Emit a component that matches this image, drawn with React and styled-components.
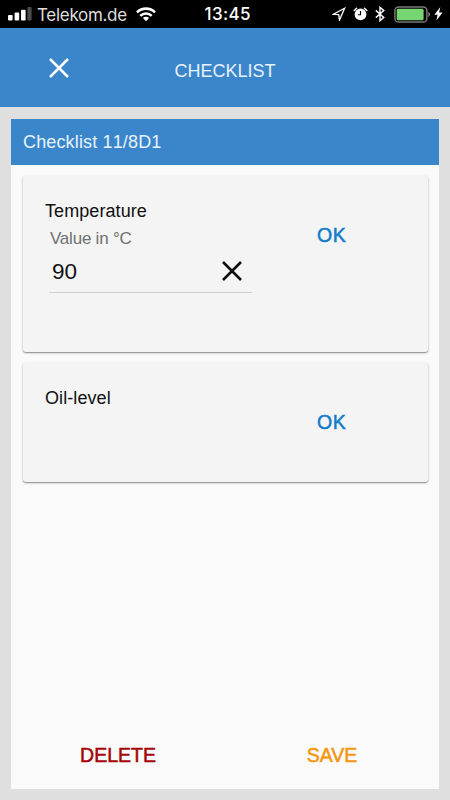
import { useState } from 'react';
import styled, { createGlobalStyle } from 'styled-components';

const GlobalStyle = createGlobalStyle`
  * {
    box-sizing: border-box;
  }
  body {
    margin: 0;
    font-family: 'Liberation Sans', Arial, sans-serif;
    background: #dfdfdf;
  }
  h1, h2, h3, p {
    margin: 0;
    font-weight: 400;
  }
  button {
    border: none;
    padding: 0;
    background: none;
    font-family: inherit;
    cursor: pointer;
  }
`;

function StatusBar() {
  return (
    <Status>
      <Carrier>
        <svg width="24" height="14" viewBox="0 0 24 14" fill="#fff">
          <rect x="0" y="8" width="4.6" height="5.5" rx="1" />
          <rect x="6.6" y="5.6" width="4.6" height="7.9" rx="1" />
          <rect x="13" y="2.8" width="4.6" height="10.7" rx="1" />
          <rect x="19.4" y="0" width="4.2" height="13.5" rx="1" fill="#4c4c4c" />
        </svg>
        <CarrierName>Telekom.de</CarrierName>
        <svg width="20" height="15" viewBox="0 0 20 15" fill="none" stroke="#fff" strokeWidth="2.6">
          <path d="M1 5.3a12.8 12.8 0 0 1 18 0" />
          <path d="M4.3 8.8a8.1 8.1 0 0 1 11.4 0" />
          <path d="M10 14.2 6.9 11.1a4.4 4.4 0 0 1 6.2 0Z" fill="#fff" stroke="none" />
        </svg>
      </Carrier>
      <Time>13:45</Time>
      <Indicators>
        <svg width="14" height="14" viewBox="0 0 14 14" fill="none" stroke="#fff" strokeWidth="1.3">
          <path d="M12.6 1.3 1.4 7.3l5.3.3.8 5.4Z" />
        </svg>
        <svg width="15" height="14" viewBox="0 0 15 14">
          <circle cx="7.5" cy="7.4" r="5.9" fill="#fff" />
          <path d="M1.2 3.5 3.6 1.3M13.8 3.5 11.4 1.3" stroke="#fff" strokeWidth="1.5" strokeLinecap="round" />
          <path d="M7.5 3.9v3.8H4.9" fill="none" stroke="#000" strokeWidth="1.1" />
        </svg>
        <svg width="10" height="16" viewBox="0 0 10 16" fill="none" stroke="#fff" strokeWidth="1.4">
          <path d="M.8 4.4 8.8 11.4 5 14.7V1.3l3.8 3.3L.8 11.6" />
        </svg>
        <svg width="38" height="17" viewBox="0 0 38 17">
          <rect x=".9" y=".9" width="32" height="15.2" rx="3.6" fill="none" stroke="#777" strokeWidth="1.5" />
          <rect x="2.7" y="2.7" width="26.9" height="11.6" rx="1.5" fill="#76d672" />
          <path d="M34.4 5.8q3.4 2.7 0 5.4Z" fill="#888" />
        </svg>
        <svg width="9" height="14" viewBox="0 0 9 14" fill="#fff">
          <path d="M6.3 0 .4 7.7h3.2L2.4 13.6 8.6 5.6H5.1Z" />
        </svg>
      </Indicators>
    </Status>
  );
}

function CloseIcon({ color, thickness }) {
  return (
    <svg width="20" height="20" viewBox="0 0 20 20" fill="none" stroke={color} strokeWidth={thickness}>
      <path d="M1 1 19 19M19 1 1 19" />
    </svg>
  );
}

function App() {
  const [temperature, setTemperature] = useState('90');
  return (
    <Screen>
      <GlobalStyle />
      <StatusBar />
      <Header>
        <CloseButton aria-label="Close">
          <CloseIcon color="#fff" thickness={2.5} />
        </CloseButton>
        <HeaderTitle>CHECKLIST</HeaderTitle>
      </Header>
      <Panel>
        <PanelTitle>Checklist 11/8D1</PanelTitle>
        <Cards>
          <Card $height={176}>
            <Entry>
              <EntryName>Temperature</EntryName>
              <FieldLabel>Value in °C</FieldLabel>
              <Field>
                <Value>{temperature}</Value>
                <ClearButton aria-label="Clear value" onClick={() => setTemperature('')}>
                  <CloseIcon color="#0c0c0c" thickness={2.5} />
                </ClearButton>
              </Field>
            </Entry>
            <OkButton>OK</OkButton>
          </Card>
          <Card $height={119}>
            <Entry>
              <EntryName>Oil-level</EntryName>
            </Entry>
            <OkButton>OK</OkButton>
          </Card>
        </Cards>
        <Actions>
          <ActionButton $color="#a50505">DELETE</ActionButton>
          <ActionButton $color="#f4960f">SAVE</ActionButton>
        </Actions>
      </Panel>
    </Screen>
  );
}

const Screen = styled.div`
  width: 450px;
  height: 800px;
  display: flex;
  flex-direction: column;
  overflow: hidden;
  background: #dfdfdf;
`;

const Status = styled.div`
  height: 28px;
  flex: none;
  display: grid;
  grid-template-columns: 1fr 48px 1fr;
  align-items: center;
  padding: 0 7px 0 8px;
  background: #000;
  color: #fff;
  font-family: Inter, sans-serif;
`;

const Carrier = styled.div`
  display: flex;
  align-items: center;
  svg {
    flex: none;
  }
`;

const CarrierName = styled.span`
  width: 90px;
  margin: 2px 9px 0 5px;
  font-size: 17px;
  line-height: 26px;
  letter-spacing: -0.3px;
  color: #dedede;
  white-space: nowrap;
`;

const Time = styled.span`
  padding: 1px 0 0 3px;
  font-size: 17px;
  font-weight: 500;
  line-height: 27px;
  letter-spacing: 0.35px;
  text-align: center;
`;

const Indicators = styled.div`
  display: flex;
  align-items: center;
  justify-content: flex-end;
  gap: 7px;
  svg:nth-child(4) {
    margin-left: 2px;
  }
  svg:last-child {
    margin-left: -5px;
  }
`;

const Header = styled.header`
  height: 79px;
  flex: none;
  display: grid;
  grid-template-columns: 1fr auto 1fr;
  align-items: center;
  background: #3b86cb;
`;

const CloseButton = styled.button`
  width: 20px;
  height: 20px;
  margin: 0 0 0 49px;
  svg {
    display: block;
  }
`;

const HeaderTitle = styled.h1`
  padding-top: 6px;
  font-size: 18px;
  line-height: 20px;
  color: #e6f2fc;
`;

const Panel = styled.main`
  height: 670px;
  margin: 12px 11px 0;
  display: flex;
  flex-direction: column;
  background: #fafafa;
`;

const PanelTitle = styled.h2`
  height: 46px;
  padding-left: 12px;
  font-size: 18px;
  line-height: 46px;
  letter-spacing: 0.15px;
  font-kerning: none;
  background: #3b86cb;
  color: #e6f2fc;
`;

const Cards = styled.div`
  flex: 1;
  display: flex;
  flex-direction: column;
  gap: 11px;
  padding: 11px 11px 0 12px;
`;

const Card = styled.section`
  height: ${({ $height }) => $height}px;
  display: grid;
  grid-template-columns: 229px 1fr;
  padding-left: 22px;
  border-radius: 3px;
  background: #f4f4f4;
  box-shadow: 0 1px 1px rgba(0, 0, 0, 0.3), 0 1px 3px rgba(0, 0, 0, 0.22);
`;

const Entry = styled.div`
  padding-top: 25px;
`;

const EntryName = styled.h3`
  font-size: 18px;
  line-height: 20px;
  letter-spacing: 0.08px;
  color: #111;
`;

const FieldLabel = styled.p`
  padding: 8px 0 0 5px;
  font-size: 17px;
  line-height: 20px;
  letter-spacing: -0.22px;
  color: #707070;
`;

const Field = styled.div`
  width: 203px;
  height: 44px;
  margin-left: 4px;
  display: flex;
  align-items: center;
  justify-content: space-between;
  padding: 0 10px 0 3px;
  border-bottom: 1px solid #cfcfcf;
`;

const Value = styled.span`
  padding-top: 3px;
  font-size: 22.5px;
  color: #111;
`;

const ClearButton = styled.button`
  width: 20px;
  height: 20px;
  svg {
    display: block;
  }
`;

/* half-bold capitals, between the regular and bold cuts */
const TextButton = styled.button`
  font-size: 19.5px;
  line-height: 24px;
  -webkit-text-stroke: 0.5px currentColor;
`;

const OkButton = styled(TextButton)`
  align-self: start;
  justify-self: start;
  margin: 47px 0 0 43px;
  letter-spacing: 0.6px;
  color: #127bca;
`;

const Actions = styled.footer`
  height: 68px;
  display: grid;
  grid-template-columns: 1fr 1fr;
  align-items: center;
`;

const ActionButton = styled(TextButton)`
  color: ${({ $color }) => $color};
`;

export default App;
